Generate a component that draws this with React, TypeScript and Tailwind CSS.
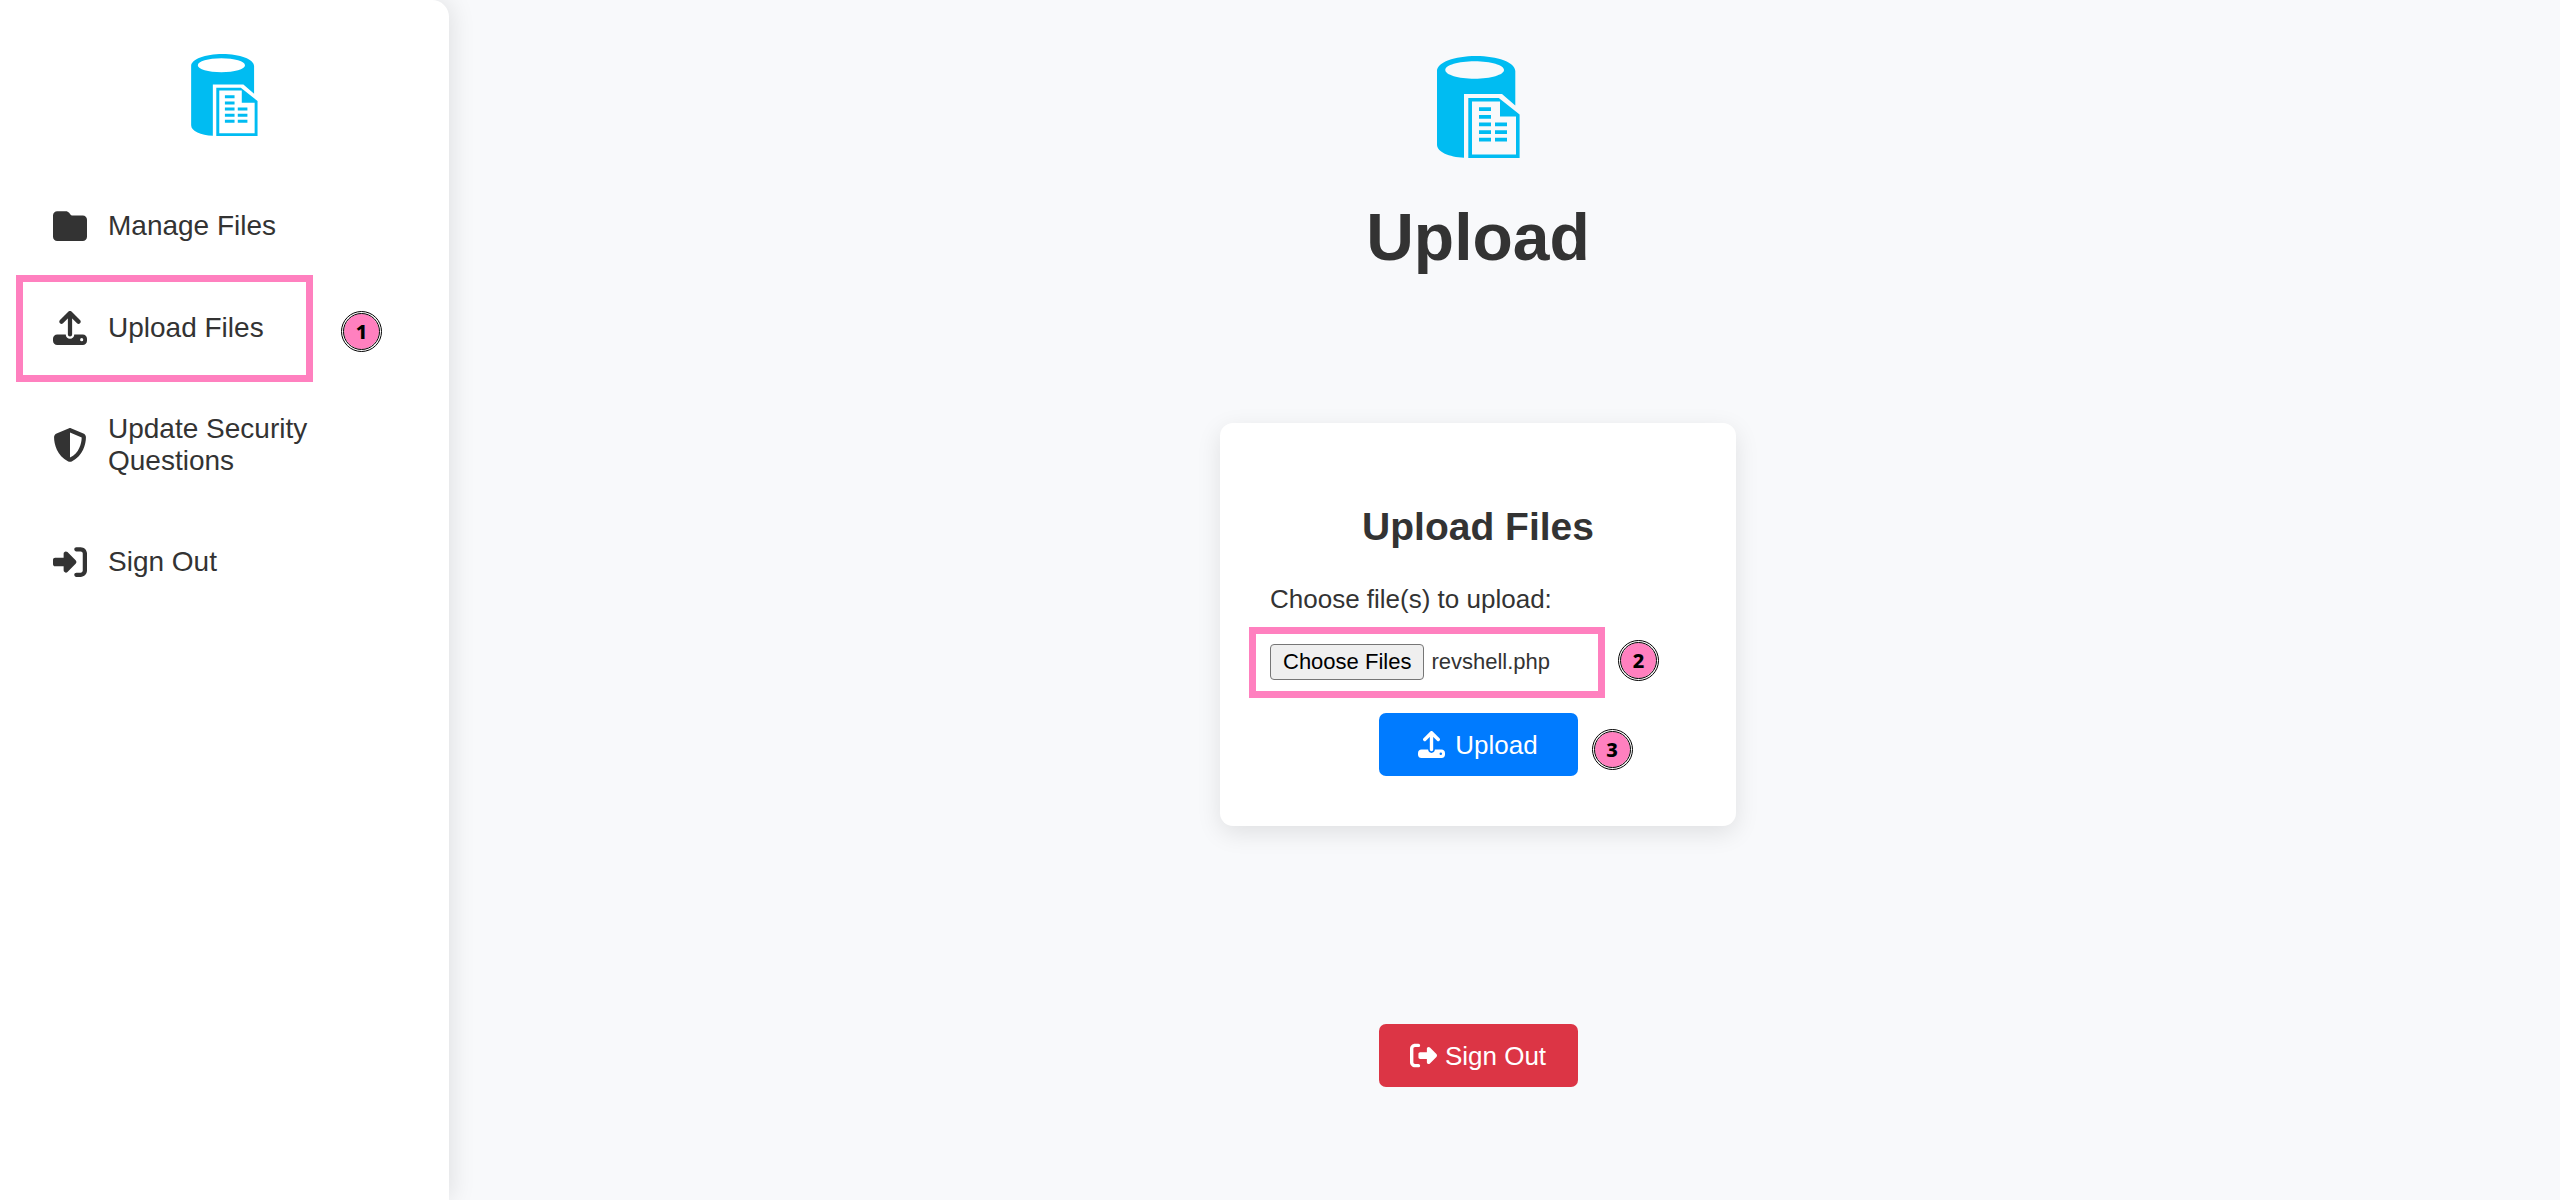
import { useEffect, useRef } from "react";
import type { ReactNode } from "react";
import {
  FaFolder,
  FaRightFromBracket,
  FaRightToBracket,
  FaShieldHalved,
} from "react-icons/fa6";

function Logo({ className }: { className: string }) {
  return (
    <svg viewBox="0 0 83 102" className={className} fill="#00bcf2" aria-hidden="true">
      <path
        fillRule="evenodd"
        d="M0 15C0 6.500 17.500 0 39 0s39.300 6.500 39.300 15v34.500L65 38H27v63.800C12 101 0 96 0 88.500ZM8.300 14c0 4.800 13 8.700 29.300 8.700S67 18.800 67 14 53.900 5.300 37.600 5.300 8.300 9.200 8.300 14Z"
      />
      <path
        fillRule="evenodd"
        d="M31.300 42h30.500L82.600 58.500V102H31.300ZM35 45.500v53h44V60.500H63v-15Z"
      />
      <path d="M42 51.300h12v3.700H42zM42 59h12v3.700H42zM42 66.500h12v3.700H42zM42 74.200h12v3.700H42zM42 81.700h12v3.700H42zM58 66.500h12v3.700H58zM58 74.200h12v3.700H58zM58 81.700h12v3.700H58z" />
    </svg>
  );
}

function UploadIcon({ className }: { className: string }) {
  return (
    <svg viewBox="0 0 512 512" className={className} fill="none" aria-hidden="true">
      <path
        d="M128 160 256 32l128 128M256 50v302"
        stroke="currentColor"
        strokeWidth="64"
        strokeLinecap="round"
        strokeLinejoin="round"
      />
      <path
        fill="currentColor"
        fillRule="evenodd"
        d="M64 352h128c0 36 28 64 64 64s64-28 64-64h128c35 0 64 29 64 64v32c0 35-29 64-64 64H64c-35 0-64-29-64-64v-32c0-35 29-64 64-64Zm368 56a24 24 0 1 0 0 48 24 24 0 0 0 0-48Z"
      />
    </svg>
  );
}

function Badge({ children, className }: { children: ReactNode; className: string }) {
  return (
    <span
      className={`absolute flex size-[41px] items-center justify-center rounded-full border-3 border-double border-black bg-[#ff80bf] bg-clip-padding font-['Noto_Sans',sans-serif] text-[20px] leading-none font-extrabold text-black ${className}`}
    >
      {children}
    </span>
  );
}

function NavItem({ icon, children }: { icon: ReactNode; children: ReactNode }) {
  return (
    <a href="#" className="flex items-center gap-[21px] py-[34px] pr-20 pl-[53px] text-[28px] leading-8">
      {icon}
      <span>{children}</span>
    </a>
  );
}

export default function App() {
  const fileInput = useRef<HTMLInputElement>(null);

  useEffect(() => {
    const selection = new DataTransfer();
    selection.items.add(new File(["revshell"], "revshell.php"));
    if (fileInput.current) fileInput.current.files = selection.files;
  }, []);

  return (
    <div className="flex min-h-screen bg-[#f8f9fb] font-['Liberation_Sans',Arial,sans-serif] text-[#333333]">
      <aside className="w-[449px] shrink-0 rounded-tr-[17px] bg-white shadow-[3px_0_25px_rgba(0,0,0,0.1)]">
        <Logo className="mx-auto mt-[54px] mb-[39px] h-[82px] w-[67px]" />
        <nav>
          <NavItem icon={<FaFolder className="size-[34px] shrink-0" />}>Manage Files</NavItem>
          <div className="relative">
            <NavItem icon={<UploadIcon className="size-[34px] shrink-0" />}>Upload Files</NavItem>
            <span className="pointer-events-none absolute -top-0.5 left-4 h-[107px] w-[297px] border-7 border-[#ff80bf]" />
            <Badge className="top-[34px] left-[341px]">1</Badge>
          </div>
          <NavItem icon={<FaShieldHalved className="size-[34px] shrink-0" />}>Update Security Questions</NavItem>
          <NavItem icon={<FaRightToBracket className="size-[34px] shrink-0" />}>Sign Out</NavItem>
        </nav>
      </aside>

      <main className="flex flex-1 flex-col items-center pr-[53px]">
        <Logo className="mt-14 h-[102px] w-[83px]" />
        <h1 className="mt-[41px] text-[66px] leading-[76px] font-bold">Upload</h1>

        <section className="mt-[148px] w-[516px] rounded-[13px] bg-white px-[50px] pt-[81px] pb-[50px] shadow-[0_7px_25px_rgba(0,0,0,0.1)]">
          <h2 className="text-center text-[39px] leading-[46px] font-bold">Upload Files</h2>
          <form onSubmit={(event) => event.preventDefault()}>
            <label htmlFor="files" className="mt-[33px] block text-[26px] leading-8">
              Choose file(s) to upload:
            </label>
            <div className="relative mt-[29px]">
              <input
                ref={fileInput}
                id="files"
                type="file"
                multiple
                className="block w-[330px] text-[22px] leading-7 file:mr-[7px] file:h-9 file:rounded-[4px] file:border file:border-solid file:border-[#767676] file:bg-[#efefef] file:px-3 file:text-black"
              />
              <span className="pointer-events-none absolute -top-[17px] -left-[21px] h-[71px] w-[356px] border-7 border-[#ff80bf]" />
              <Badge className="-top-[4px] left-[348px]">2</Badge>
            </div>
            <div className="relative mx-auto mt-[33px] w-[199px]">
              <button
                type="submit"
                className="flex h-[63px] w-full items-center justify-center gap-2.5 rounded-[7px] bg-[#007bff] text-[26px] leading-8 text-white"
              >
                <UploadIcon className="size-[27px]" />
                Upload
              </button>
              <Badge className="top-4 left-[213px]">3</Badge>
            </div>
          </form>
        </section>

        <button
          type="button"
          className="mt-[198px] flex h-[63px] w-[199px] items-center justify-center gap-2 rounded-[7px] bg-[#dc3545] text-[26px] leading-8 text-white"
        >
          <FaRightFromBracket className="size-[27px]" />
          Sign Out
        </button>
      </main>
    </div>
  );
}
